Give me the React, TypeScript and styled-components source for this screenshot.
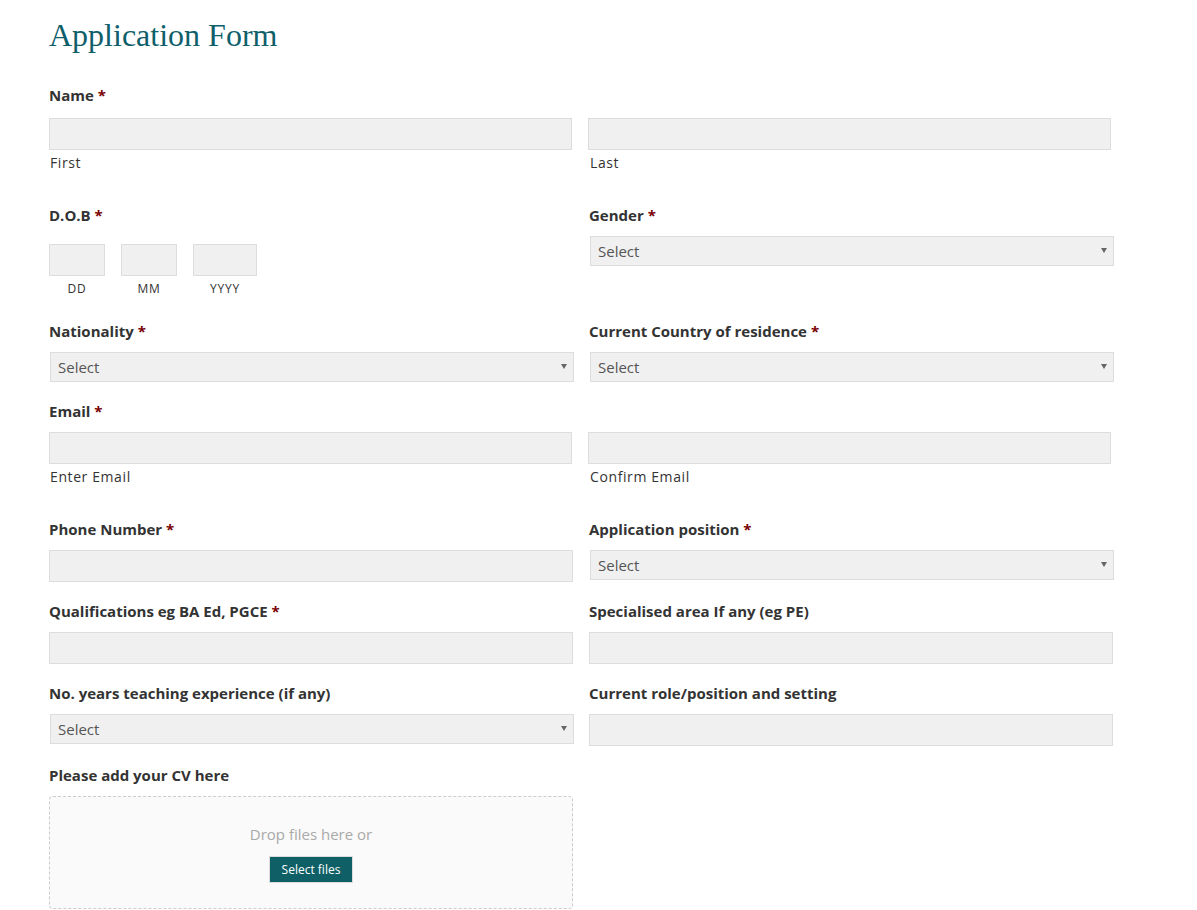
import React from 'react'
import styled, { createGlobalStyle } from 'styled-components'

const GlobalStyle = createGlobalStyle`
  body {
    margin: 0;
    background: #fff;
    font-family: 'Open Sans', sans-serif;
    color: #333;
  }
`

const Page = styled.div`
  padding: 16px 0 0 49px;
  width: 1070px;
`
const Title = styled.h1`
  margin: 0 0 31px;
  font-family: 'Liberation Serif', serif;
  font-weight: 400;
  font-size: 32px;
  line-height: 38px;
  color: #0f5f6b;
`
const Row = styled.div<{ $gap: number }>`
  display: grid;
  grid-template-columns: 523px 523px;
  column-gap: 17px;
  align-items: start;
  margin-bottom: ${({ $gap }) => $gap}px;
`
const Field = styled.div`
  display: flex;
  flex-direction: column;
`
const Label = styled.div<{ $mb?: number }>`
  font-weight: 700;
  font-size: 15px;
  line-height: 20px;
  margin-bottom: ${({ $mb }) => $mb ?? 11}px;
  color: #333;
`
const Req = styled.span`
  color: #790000;
`
const TextInput = styled.input<{ $shift?: number; $w?: number }>`
  box-sizing: border-box;
  width: ${({ $w }) => $w ?? 523}px;
  height: 32px;
  margin: 0 0 0 ${({ $shift }) => $shift ?? 0}px;
  padding: 0 8px;
  background: #f0f0f0;
  border: 1px solid #dddddd;
  border-radius: 0;
  outline: none;
  font: 15px 'Open Sans', sans-serif;
`
const Sub = styled.div`
  margin: 4px 0 0 1px;
  font-size: 14px;
  line-height: 18px;
  letter-spacing: 0.6px;
  color: #333;
`
const SelectBox = styled.div<{ $shift?: number }>`
  position: relative;
  box-sizing: border-box;
  width: 524px;
  height: 30px;
  margin-left: ${({ $shift }) => $shift ?? 1}px;
  padding: 0 7px;
  display: flex;
  align-items: center;
  background: #f0f0f0;
  border: 1px solid #dddddd;
  font-size: 15px;
  color: #555;

  &::after {
    content: '';
    position: absolute;
    right: 6px;
    top: 11px;
    border-left: 3px solid transparent;
    border-right: 3px solid transparent;
    border-top: 5px solid #666;
  }
`
const DateGroup = styled.div`
  display: flex;
  gap: 16px;
  margin-top: 8px;
`
const DatePart = styled.div`
  display: flex;
  flex-direction: column;
  align-items: center;
`
const DateInput = styled.input<{ $w: number }>`
  box-sizing: border-box;
  width: ${({ $w }) => $w}px;
  height: 32px;
  margin: 0;
  background: #f0f0f0;
  border: 1px solid #dddddd;
  border-radius: 0;
  outline: none;
`
const DateSub = styled.div`
  margin-top: 5px;
  font-size: 12px;
  line-height: 16px;
  letter-spacing: 0.8px;
  color: #333;
`
const DropZone = styled.div`
  box-sizing: border-box;
  width: 524px;
  height: 113px;
  padding-top: 27px;
  display: flex;
  flex-direction: column;
  align-items: center;
  background: #fafafa;
  border: 1px dashed #cccccc;
  border-radius: 4px;
`
const DropText = styled.div`
  font-size: 15px;
  line-height: 20px;
  color: #a9a9a9;
  margin-bottom: 12px;
`
const FilesButton = styled.button`
  box-sizing: border-box;
  width: 84px;
  height: 27px;
  padding: 0;
  background: #0e5f66;
  border: 1px solid #dcdcdc;
  color: #fff;
  font: 12px 'Open Sans', sans-serif;
  cursor: pointer;
`

const Star = () => <Req>*</Req>

const App = () => {
  return (
    <Page>
      <GlobalStyle />
      <Title>Application Form</Title>

      <Label $mb={13}>
        Name <Star />
      </Label>
      <Row $gap={33}>
        <Field>
          <TextInput />
          <Sub>First</Sub>
        </Field>
        <Field>
          <TextInput $shift={-1} />
          <Sub>Last</Sub>
        </Field>
      </Row>

      <Row $gap={24}>
        <Field>
          <Label>
            D.O.B <Star />
          </Label>
          <DateGroup>
            <DatePart>
              <DateInput $w={56} />
              <DateSub>DD</DateSub>
            </DatePart>
            <DatePart>
              <DateInput $w={56} />
              <DateSub>MM</DateSub>
            </DatePart>
            <DatePart>
              <DateInput $w={64} />
              <DateSub>YYYY</DateSub>
            </DatePart>
          </DateGroup>
        </Field>
        <Field>
          <Label>
            Gender <Star />
          </Label>
          <SelectBox $shift={1}>Select</SelectBox>
        </Field>
      </Row>

      <Row $gap={19}>
        <Field>
          <Label>
            Nationality <Star />
          </Label>
          <SelectBox>Select</SelectBox>
        </Field>
        <Field>
          <Label>
            Current Country of residence <Star />
          </Label>
          <SelectBox $shift={1}>Select</SelectBox>
        </Field>
      </Row>

      <Label>
        Email <Star />
      </Label>
      <Row $gap={33}>
        <Field>
          <TextInput />
          <Sub>Enter Email</Sub>
        </Field>
        <Field>
          <TextInput $shift={-1} />
          <Sub>Confirm Email</Sub>
        </Field>
      </Row>

      <Row $gap={19}>
        <Field>
          <Label>
            Phone Number <Star />
          </Label>
          <TextInput $w={524} />
        </Field>
        <Field>
          <Label>
            Application position <Star />
          </Label>
          <SelectBox $shift={1}>Select</SelectBox>
        </Field>
      </Row>

      <Row $gap={19}>
        <Field>
          <Label>
            Qualifications eg BA Ed, PGCE <Star />
          </Label>
          <TextInput $w={524} />
        </Field>
        <Field>
          <Label>Specialised area If any (eg PE)</Label>
          <TextInput $w={524} />
        </Field>
      </Row>

      <Row $gap={19}>
        <Field>
          <Label>No. years teaching experience (if any)</Label>
          <SelectBox>Select</SelectBox>
        </Field>
        <Field>
          <Label>Current role/position and setting</Label>
          <TextInput $w={524} />
        </Field>
      </Row>

      <Label>Please add your CV here</Label>
      <DropZone>
        <DropText>Drop files here or</DropText>
        <FilesButton>Select files</FilesButton>
      </DropZone>
    </Page>
  )
}

export default App
